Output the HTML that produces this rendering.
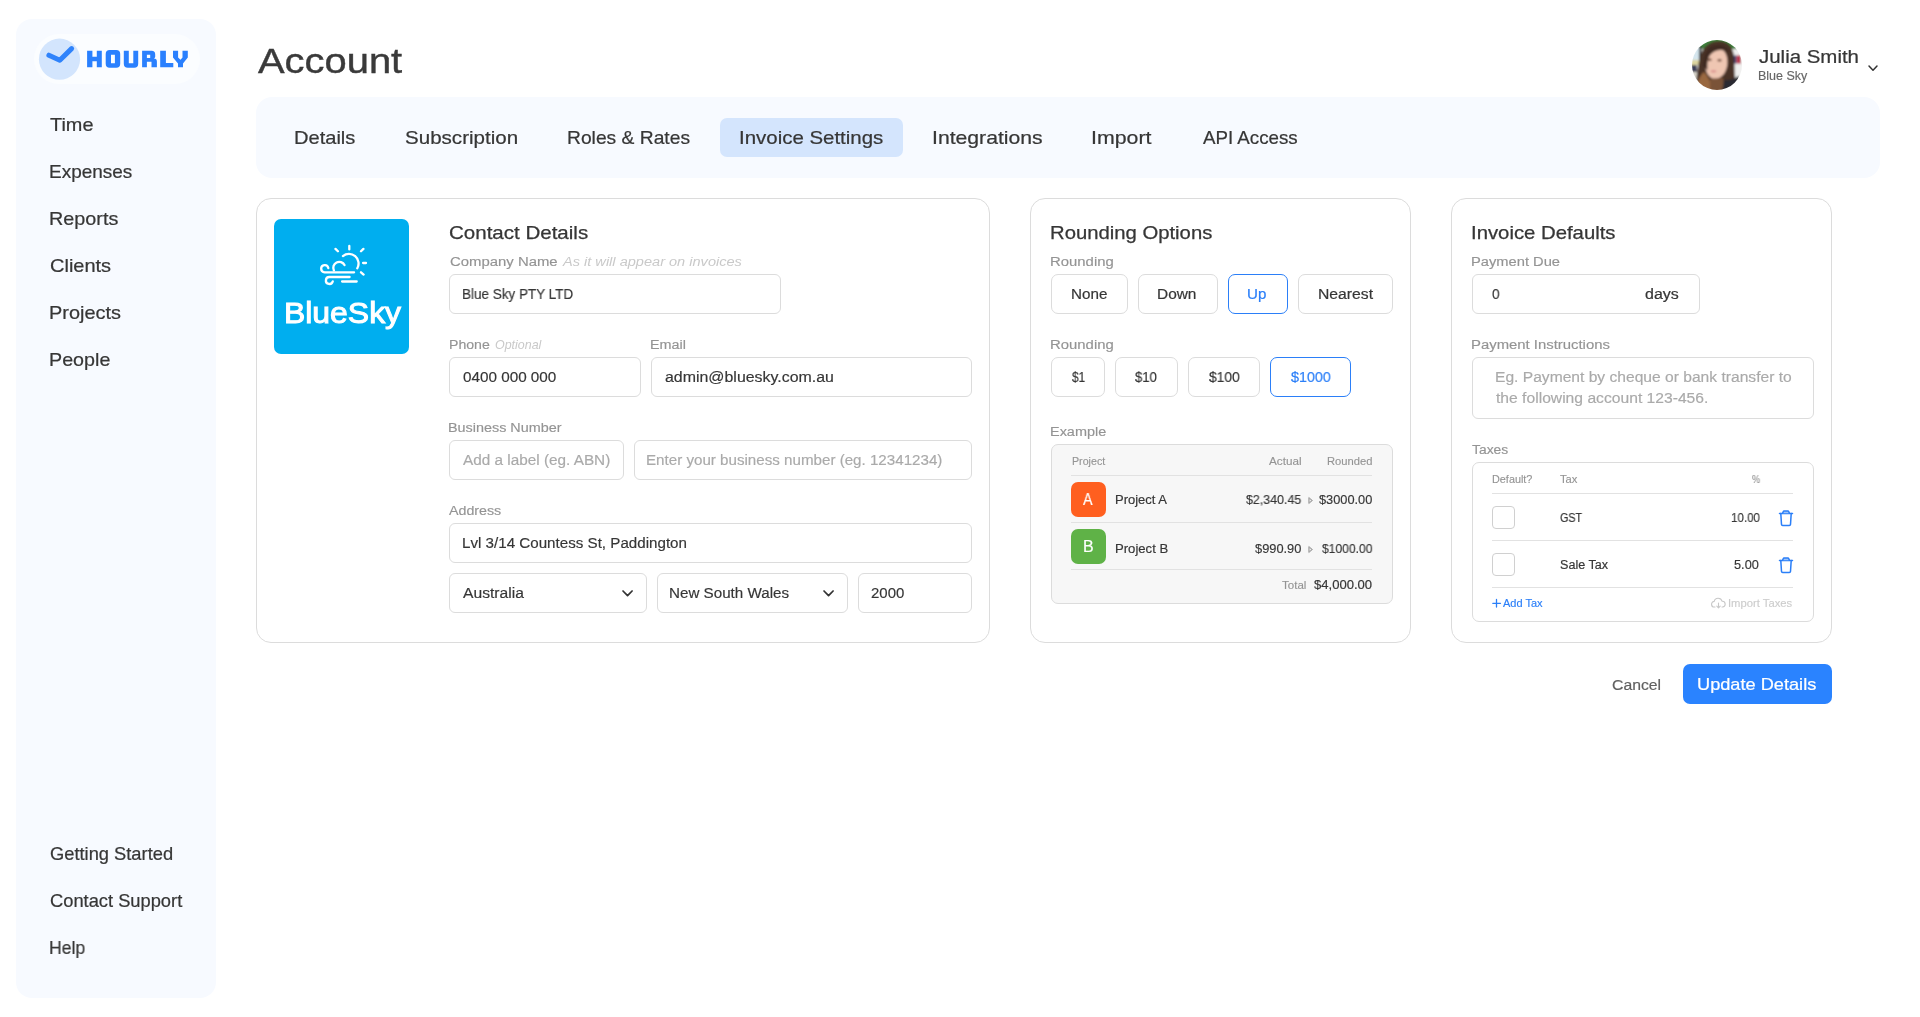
<!DOCTYPE html>
<html><head><meta charset="utf-8"><title>Account</title><style>*{margin:0;padding:0;box-sizing:border-box}
html,body{width:1920px;height:1017px;overflow:hidden;background:#fff}
body{position:relative;font-family:"Liberation Sans",sans-serif}
.b{position:absolute}
.t{position:absolute;white-space:pre;line-height:1;transform-origin:0 0;will-change:transform}
</style></head>
<body>
<div class="b" style="left:16px;top:19px;width:200px;height:979px;background:#f7faff;border-radius:16px"></div>
<div class="b" style="left:34px;top:34px;width:166px;height:50px;background:#fbfdff;border-radius:25px"></div>
<svg class="b" style="left:0;top:0" width="220" height="100" viewBox="0 0 220 100">
<circle cx="59.5" cy="59.2" r="20.6" fill="#d3e5fd"/>
<polyline points="48.9,55.2 59.8,60.2 71.6,48.6" fill="none" stroke="#2f83fb" stroke-width="5" stroke-linecap="round" stroke-linejoin="round"/>
<g fill="#2a80fe">
<path d="M87.1 50.8h5.3v6h4.4v-6h5v16.5h-5v-6.1h-4.4v6.1h-5.3z"/>
<path d="M109.7 50.1h6.5a4 4 0 0 1 4 4v9.6a4 4 0 0 1 -4 4h-6.5a4 4 0 0 1 -4 -4v-9.6a4 4 0 0 1 4 -4z M111 54.7v8.5h3.9v-8.5z" fill-rule="evenodd"/>
<path d="M123.8 50.8h5v12.4h4.5v-12.4h4.9v12.9a4 4 0 0 1 -4 4h-6.4a4 4 0 0 1 -4 -4z"/>
<path d="M142.1 50.8h9.5a3.6 3.6 0 0 1 3.6 3.6v2.4a2.2 2.2 0 0 1 -1.2 1.8a3 3 0 0 1 2.9 3v5.7h-5.4v-5.6h-4.6v5.6h-4.8z M146.9 54.7v3.3h3.3v-3.3z" fill-rule="evenodd"/>
<path d="M160.2 50.8h5.7v12.3h7.4v4.2h-13.1z"/>
<path d="M173 50.8h5.1v6.6l2.4 2.4l2 -2.4v-6.6h5.3v6.7l-4.8 6v3.8h-5v-3.8l-5 -6z"/>
</g></svg>
<svg class="b" style="left:1692px;top:40px" width="50" height="50" viewBox="0 0 50 50">
<defs><clipPath id="av"><circle cx="25" cy="25" r="25"/></clipPath><filter id="avb" x="-10%" y="-10%" width="120%" height="120%"><feGaussianBlur stdDeviation="0.9"/></filter></defs>
<g clip-path="url(#av)"><g filter="url(#avb)">
<rect x="-2" y="-2" width="54" height="54" fill="#ecefec"/>
<rect x="-2" y="-2" width="54" height="11" fill="#3d7f3a"/>
<rect x="-2" y="7" width="10" height="14" fill="#d5e6ee"/>
<rect x="-2" y="20" width="9" height="5" fill="#ddd6a0"/>
<rect x="-2" y="25" width="7" height="7" fill="#3c3f58"/>
<rect x="-2" y="32" width="9" height="12" fill="#d9d6cc"/>
<rect x="7" y="6" width="2.4" height="14" fill="#2c2f33"/>
<rect x="40" y="9" width="12" height="26" fill="#f0f0ef"/>
<rect x="40.5" y="15.5" width="4" height="8" fill="#3b4170"/>
<rect x="44.5" y="15.5" width="4.5" height="8" fill="#b9334a"/>
<path d="M4 52 C4 38 6 22 9 14 C12 5 20 1 27 1 C35 1 41 6 42 16 C43 26 42 36 44 44 L46 52 Z" fill="#4a3328"/>
<path d="M3 52 C5 42 8 35 12 32 C16 36 19 42 21 52 Z" fill="#99683f"/>
<path d="M12.8 22 C12.8 13 17 7.5 24 7.5 C31 7.5 35.4 13 35.4 22 C35.4 30 31 38.8 23 38.8 C16 38.8 12.8 30 12.8 22 Z" fill="#efc6b2"/>
<path d="M18 39 L31 38 L33 52 L18 52 Z" fill="#7a5238"/>
<path d="M32 40 C36 41 41 39 47 36 L52 52 L30 52 Z" fill="#2b2a30"/>
<path d="M11 26 C11 14 16 5 26 5 C33 5 37 9 38 13 C32 9 24 9 19 14 C16 17 15 22 15.5 30 Z" fill="#3f2c22"/>
<ellipse cx="17.7" cy="19.7" rx="2" ry="1.2" fill="#6b4433"/>
<ellipse cx="27.5" cy="20.2" rx="2" ry="1.2" fill="#6b4433"/>
<ellipse cx="21.5" cy="31.3" rx="3" ry="1.1" fill="#d98b8c"/>
</g></g></svg>
<svg class="b" style="left:1867.3px;top:63.7px" width="12" height="8.2"><polyline points="2,2 6.0,6.2 10,2" fill="none" stroke="#333" stroke-width="1.5" stroke-linecap="round" stroke-linejoin="round"/></svg>
<div class="b" style="left:256px;top:97px;width:1624px;height:81px;background:#f7faff;border-radius:16px"></div>
<div class="b" style="left:720px;top:118px;width:183px;height:39px;background:#d4e5fd;border-radius:7px"></div>
<div class="b" style="left:256px;top:198px;width:734px;height:445px;border:1px solid #dcdcdc;border-radius:15px"></div>
<div class="b" style="left:1030px;top:198px;width:381px;height:445px;border:1px solid #dcdcdc;border-radius:15px"></div>
<div class="b" style="left:1451px;top:198px;width:381px;height:445px;border:1px solid #dcdcdc;border-radius:15px"></div>
<div class="b" style="left:274px;top:219px;width:135px;height:135px;background:#00aeef;border-radius:7px"></div>
<svg class="b" style="left:310px;top:238px" width="65" height="54" viewBox="0 0 65 54" fill="none" stroke="#fff" stroke-width="2.3" stroke-linecap="round">
<path d="M32.9 18.1 A9.6 9.6 0 0 1 47.3 30.3"/>
<path d="M39.3 8v3.4 M25.5 10.9l2.4 2.4 M53.4 10.9l-2.4 2.4 M53.1 25h2.9 M51 34.3l2.6 2.3"/>
<path d="M34.5 27.1 A5.7 5.7 0 1 0 23.9 32.4"/>
<path d="M18.3 30 A3.6 3.6 0 1 0 14.6 34.3 H44.1"/>
<path d="M39.6 39 H19.6 A3.5 3.5 0 1 0 22.8 43.3"/>
<path d="M32.1 43.5 H46.7"/>
</svg>
<div class="b" style="left:449px;top:274px;width:332px;height:40px;background:#fff;border:1px solid #dcdcdc;border-radius:6px"></div>
<div class="b" style="left:449px;top:357px;width:192px;height:40px;background:#fff;border:1px solid #dcdcdc;border-radius:6px"></div>
<div class="b" style="left:651px;top:357px;width:321px;height:40px;background:#fff;border:1px solid #dcdcdc;border-radius:6px"></div>
<div class="b" style="left:449px;top:440px;width:175px;height:40px;background:#fff;border:1px solid #dcdcdc;border-radius:6px"></div>
<div class="b" style="left:634px;top:440px;width:338px;height:40px;background:#fff;border:1px solid #dcdcdc;border-radius:6px"></div>
<div class="b" style="left:449px;top:523px;width:523px;height:40px;background:#fff;border:1px solid #dcdcdc;border-radius:6px"></div>
<div class="b" style="left:449px;top:573px;width:198px;height:40px;background:#fff;border:1px solid #dcdcdc;border-radius:6px"></div>
<div class="b" style="left:657px;top:573px;width:191px;height:40px;background:#fff;border:1px solid #dcdcdc;border-radius:6px"></div>
<div class="b" style="left:858px;top:573px;width:114px;height:40px;background:#fff;border:1px solid #dcdcdc;border-radius:6px"></div>
<svg class="b" style="left:620.5px;top:588.7px" width="13.1" height="8.7"><polyline points="2,2 6.55,6.7 11.1,2" fill="none" stroke="#333" stroke-width="1.7" stroke-linecap="round" stroke-linejoin="round"/></svg>
<svg class="b" style="left:821.8px;top:588.7px" width="13.1" height="8.7"><polyline points="2,2 6.55,6.7 11.1,2" fill="none" stroke="#333" stroke-width="1.7" stroke-linecap="round" stroke-linejoin="round"/></svg>
<div class="b" style="left:1051px;top:274px;width:77px;height:40px;background:#fff;border:1px solid #dcdcdc;border-radius:7px"></div>
<div class="b" style="left:1138px;top:274px;width:80px;height:40px;background:#fff;border:1px solid #dcdcdc;border-radius:7px"></div>
<div class="b" style="left:1228px;top:274px;width:60px;height:40px;background:#fff;border:1px solid #2b7ff8;border-radius:7px"></div>
<div class="b" style="left:1298px;top:274px;width:95px;height:40px;background:#fff;border:1px solid #dcdcdc;border-radius:7px"></div>
<div class="b" style="left:1051px;top:357px;width:54px;height:40px;background:#fff;border:1px solid #dcdcdc;border-radius:7px"></div>
<div class="b" style="left:1115px;top:357px;width:63px;height:40px;background:#fff;border:1px solid #dcdcdc;border-radius:7px"></div>
<div class="b" style="left:1188px;top:357px;width:72px;height:40px;background:#fff;border:1px solid #dcdcdc;border-radius:7px"></div>
<div class="b" style="left:1270px;top:357px;width:81px;height:40px;background:#fff;border:1px solid #2b7ff8;border-radius:7px"></div>
<div class="b" style="left:1051px;top:444px;width:342px;height:160px;background:#f7f7f7;border:1px solid #dcdcdc;border-radius:7px"></div>
<div class="b" style="left:1071px;top:475px;width:301px;height:1px;background:#e2e2e2"></div>
<div class="b" style="left:1071px;top:522px;width:301px;height:1px;background:#e2e2e2"></div>
<div class="b" style="left:1071px;top:569px;width:301px;height:1px;background:#e2e2e2"></div>
<div class="b" style="left:1071px;top:482px;width:35px;height:35px;background:#ff5f1f;border-radius:7px"></div>
<div class="b" style="left:1071px;top:529px;width:35px;height:35px;background:#5fb247;border-radius:7px"></div>
<svg class="b" style="left:1307px;top:496px" width="8" height="9"><path d="M1.8 1.5 L5.5 4.5 L1.8 7.5 Z" fill="#a9a9a9" stroke="#a9a9a9" stroke-width="1" stroke-linejoin="round"/><path d="M2.6 3.2 L4.2 4.5 L2.6 5.8Z" fill="#f7f7f7"/></svg>
<svg class="b" style="left:1307px;top:545px" width="8" height="9"><path d="M1.8 1.5 L5.5 4.5 L1.8 7.5 Z" fill="#a9a9a9" stroke="#a9a9a9" stroke-width="1" stroke-linejoin="round"/><path d="M2.6 3.2 L4.2 4.5 L2.6 5.8Z" fill="#f7f7f7"/></svg>
<div class="b" style="left:1472px;top:274px;width:228px;height:40px;background:#fff;border:1px solid #dcdcdc;border-radius:6px"></div>
<div class="b" style="left:1472px;top:357px;width:342px;height:62px;background:#fff;border:1px solid #dcdcdc;border-radius:6px"></div>
<div class="b" style="left:1472px;top:462px;width:342px;height:160px;background:#fff;border:1px solid #dcdcdc;border-radius:7px"></div>
<div class="b" style="left:1492px;top:493px;width:301px;height:1px;background:#e2e2e2"></div>
<div class="b" style="left:1492px;top:540px;width:301px;height:1px;background:#e2e2e2"></div>
<div class="b" style="left:1492px;top:587px;width:301px;height:1px;background:#e2e2e2"></div>
<div class="b" style="left:1492px;top:506px;width:23px;height:23px;background:#fff;border:1px solid #d0d0d0;border-radius:4px"></div>
<div class="b" style="left:1492px;top:553px;width:23px;height:23px;background:#fff;border:1px solid #d0d0d0;border-radius:4px"></div>
<svg class="b" style="left:1778px;top:509.5px" width="16" height="17" viewBox="0 0 16 17" fill="none" stroke="#2b7ff8" stroke-width="1.5" stroke-linecap="round" stroke-linejoin="round">
<path d="M1.5 3.4h13"/><path d="M4.6 3.2l0.6-1.5a1 1 0 0 1 0.9-0.6h3.8a1 1 0 0 1 0.9 0.6l0.6 1.5" fill="#9cc3fb"/>
<path d="M2.8 3.6l0.7 10.8a1.2 1.2 0 0 0 1.2 1.1h6.6a1.2 1.2 0 0 0 1.2-1.1l0.7-10.8"/></svg>
<svg class="b" style="left:1778px;top:556.5px" width="16" height="17" viewBox="0 0 16 17" fill="none" stroke="#2b7ff8" stroke-width="1.5" stroke-linecap="round" stroke-linejoin="round">
<path d="M1.5 3.4h13"/><path d="M4.6 3.2l0.6-1.5a1 1 0 0 1 0.9-0.6h3.8a1 1 0 0 1 0.9 0.6l0.6 1.5" fill="#9cc3fb"/>
<path d="M2.8 3.6l0.7 10.8a1.2 1.2 0 0 0 1.2 1.1h6.6a1.2 1.2 0 0 0 1.2-1.1l0.7-10.8"/></svg>
<svg class="b" style="left:1491px;top:597px" width="11" height="11"><path d="M5.5 2.5v7.5 M1.8 6.3h7.7" stroke="#2b7ff8" stroke-width="1.3" stroke-linecap="round"/></svg>
<svg class="b" style="left:1711px;top:597px" width="15" height="12" viewBox="0 0 15 12" fill="none" stroke="#c8c8c8" stroke-width="1.1" stroke-linecap="round" stroke-linejoin="round"><path d="M4 10H3.5A2.8 2.8 0 0 1 3.2 4.4A4 4 0 0 1 11 4.2A2.9 2.9 0 0 1 11.5 10H11"/><path d="M7.5 6v4.8 M5.8 9.2l1.7 1.7l1.7-1.7"/></svg>
<div class="b" style="left:1683px;top:664px;width:149px;height:40px;background:#2a83ff;border-radius:7px"></div>
<span class="t" style="left:49.72px;top:116.00px;font-size:18.31px;color:#363636;transform:scaleX(1.0869);-webkit-text-stroke:0.22px #363636">Time</span>
<span class="t" style="left:48.68px;top:163.00px;font-size:18.31px;color:#363636;transform:scaleX(1.0375);-webkit-text-stroke:0.22px #363636">Expenses</span>
<span class="t" style="left:48.64px;top:209.80px;font-size:18.31px;color:#363636;transform:scaleX(1.0818);-webkit-text-stroke:0.22px #363636">Reports</span>
<span class="t" style="left:49.72px;top:256.70px;font-size:18.31px;color:#363636;transform:scaleX(1.0929);-webkit-text-stroke:0.22px #363636">Clients</span>
<span class="t" style="left:48.63px;top:303.60px;font-size:18.31px;color:#363636;transform:scaleX(1.0880);-webkit-text-stroke:0.22px #363636">Projects</span>
<span class="t" style="left:48.64px;top:350.50px;font-size:18.31px;color:#363636;transform:scaleX(1.0765);-webkit-text-stroke:0.22px #363636">People</span>
<span class="t" style="left:49.71px;top:845.30px;font-size:18.31px;color:#363636;-webkit-text-stroke:0.22px #363636">Getting Started</span>
<span class="t" style="left:49.71px;top:892.20px;font-size:18.31px;color:#363636;-webkit-text-stroke:0.22px #363636">Contact Support</span>
<span class="t" style="left:48.75px;top:939.00px;font-size:18.31px;color:#363636;transform:scaleX(0.9598);-webkit-text-stroke:0.22px #363636">Help</span>
<span class="t" style="left:257.54px;top:42.90px;font-size:35.32px;color:#3a3a3a;transform:scaleX(1.1299);-webkit-text-stroke:0.42px #3a3a3a">Account</span>
<span class="t" style="left:1758.92px;top:48.00px;font-size:18.90px;color:#363636;transform:scaleX(1.0821);-webkit-text-stroke:0.23px #363636">Julia Smith</span>
<span class="t" style="left:1757.88px;top:69.60px;font-size:12.50px;color:#666666;transform:scaleX(0.9913);-webkit-text-stroke:0.15px #666666">Blue Sky</span>
<span class="t" style="left:294.14px;top:128.90px;font-size:18.60px;color:#363636;transform:scaleX(1.0796);-webkit-text-stroke:0.22px #363636">Details</span>
<span class="t" style="left:405.22px;top:128.90px;font-size:18.60px;color:#363636;transform:scaleX(1.1056);-webkit-text-stroke:0.22px #363636">Subscription</span>
<span class="t" style="left:567.08px;top:128.90px;font-size:18.60px;color:#363636;transform:scaleX(1.0351);-webkit-text-stroke:0.22px #363636">Roles &amp; Rates</span>
<span class="t" style="left:738.82px;top:128.90px;font-size:18.60px;color:#363636;transform:scaleX(1.0992);-webkit-text-stroke:0.22px #363636">Invoice Settings</span>
<span class="t" style="left:931.99px;top:128.90px;font-size:18.60px;color:#363636;transform:scaleX(1.1385);-webkit-text-stroke:0.22px #363636">Integrations</span>
<span class="t" style="left:1090.98px;top:128.90px;font-size:18.60px;color:#363636;transform:scaleX(1.1469);-webkit-text-stroke:0.22px #363636">Import</span>
<span class="t" style="left:1202.91px;top:128.90px;font-size:18.60px;color:#363636;transform:scaleX(1.0064);-webkit-text-stroke:0.22px #363636">API Access</span>
<span class="t" style="left:284.10px;top:298.00px;font-size:29.94px;color:#ffffff;transform:scaleX(1.0656);-webkit-text-stroke:1.00px #ffffff">BlueSky</span>
<span class="t" style="left:449.14px;top:225.00px;font-size:17.73px;color:#363636;transform:scaleX(1.1582);-webkit-text-stroke:0.25px #363636">Contact Details</span>
<span class="t" style="left:449.59px;top:255.00px;font-size:13.23px;color:#949494;transform:scaleX(1.1268);-webkit-text-stroke:0.16px #949494">Company Name</span>
<span class="t" style="left:563.20px;top:255.00px;font-size:13.23px;color:#c9c9c9;transform:scaleX(1.1016);font-style:italic">As it will appear on invoices</span>
<span class="t" style="left:461.73px;top:287.00px;font-size:14.24px;color:#363636;transform:scaleX(0.9477);-webkit-text-stroke:0.17px #363636">Blue Sky PTY LTD</span>
<span class="t" style="left:448.82px;top:338.00px;font-size:13.23px;color:#949494;transform:scaleX(1.0667);-webkit-text-stroke:0.16px #949494">Phone</span>
<span class="t" style="left:494.50px;top:340.00px;font-size:11.92px;color:#c9c9c9;transform:scaleX(1.0447);font-style:italic">Optional</span>
<span class="t" style="left:650.30px;top:338.00px;font-size:13.23px;color:#949494;transform:scaleX(1.0875);-webkit-text-stroke:0.16px #949494">Email</span>
<span class="t" style="left:462.99px;top:370.00px;font-size:14.24px;color:#363636;transform:scaleX(1.0718);-webkit-text-stroke:0.17px #363636">0400 000 000</span>
<span class="t" style="left:664.50px;top:370.00px;font-size:14.24px;color:#363636;transform:scaleX(1.1183);-webkit-text-stroke:0.17px #363636">admin@bluesky.com.au</span>
<span class="t" style="left:448.30px;top:421.00px;font-size:13.23px;color:#949494;transform:scaleX(1.0876);-webkit-text-stroke:0.16px #949494">Business Number</span>
<span class="t" style="left:462.59px;top:453.00px;font-size:14.24px;color:#aaaaaa;transform:scaleX(1.0758);-webkit-text-stroke:0.17px #aaaaaa">Add a label (eg. ABN)</span>
<span class="t" style="left:646.03px;top:453.00px;font-size:14.24px;color:#aaaaaa;transform:scaleX(1.0641);-webkit-text-stroke:0.17px #aaaaaa">Enter your business number (eg. 12341234)</span>
<span class="t" style="left:449.39px;top:504.00px;font-size:13.23px;color:#949494;transform:scaleX(1.0766);-webkit-text-stroke:0.16px #949494">Address</span>
<span class="t" style="left:461.53px;top:536.00px;font-size:14.24px;color:#363636;transform:scaleX(1.0647);-webkit-text-stroke:0.17px #363636">Lvl 3/14 Countess St, Paddington</span>
<span class="t" style="left:462.59px;top:586.00px;font-size:14.24px;color:#363636;transform:scaleX(1.1000);-webkit-text-stroke:0.17px #363636">Australia</span>
<span class="t" style="left:669.32px;top:586.00px;font-size:14.24px;color:#363636;transform:scaleX(1.0667);-webkit-text-stroke:0.17px #363636">New South Wales</span>
<span class="t" style="left:870.99px;top:586.00px;font-size:14.24px;color:#363636;transform:scaleX(1.0526);-webkit-text-stroke:0.17px #363636">2000</span>
<span class="t" style="left:1050.00px;top:225.00px;font-size:17.73px;color:#363636;transform:scaleX(1.1442);-webkit-text-stroke:0.25px #363636">Rounding Options</span>
<span class="t" style="left:1049.96px;top:255.00px;font-size:13.23px;color:#949494;transform:scaleX(1.1264);-webkit-text-stroke:0.16px #949494">Rounding</span>
<span class="t" style="left:1070.65px;top:287.00px;font-size:14.39px;color:#363636;transform:scaleX(1.0574);-webkit-text-stroke:0.20px #363636">None</span>
<span class="t" style="left:1157.43px;top:287.00px;font-size:14.39px;color:#363636;transform:scaleX(1.0735);-webkit-text-stroke:0.20px #363636">Down</span>
<span class="t" style="left:1247.45px;top:287.00px;font-size:14.39px;color:#2b7ff8;transform:scaleX(1.0522);-webkit-text-stroke:0.20px #2b7ff8">Up</span>
<span class="t" style="left:1317.52px;top:287.00px;font-size:14.39px;color:#363636;transform:scaleX(1.0940);-webkit-text-stroke:0.20px #363636">Nearest</span>
<span class="t" style="left:1049.96px;top:338.00px;font-size:13.23px;color:#949494;transform:scaleX(1.1264);-webkit-text-stroke:0.16px #949494">Rounding</span>
<span class="t" style="left:1071.68px;top:370.00px;font-size:14.39px;color:#363636;transform:scaleX(0.8212);-webkit-text-stroke:0.20px #363636">$1</span>
<span class="t" style="left:1135.39px;top:370.00px;font-size:14.39px;color:#363636;transform:scaleX(0.9094);-webkit-text-stroke:0.20px #363636">$10</span>
<span class="t" style="left:1208.50px;top:370.00px;font-size:14.39px;color:#363636;transform:scaleX(0.9601);-webkit-text-stroke:0.20px #363636">$100</span>
<span class="t" style="left:1290.60px;top:370.00px;font-size:14.39px;color:#2b7ff8;transform:scaleX(0.9930);-webkit-text-stroke:0.20px #2b7ff8">$1000</span>
<span class="t" style="left:1050.29px;top:425.00px;font-size:13.23px;color:#949494;transform:scaleX(1.0928);-webkit-text-stroke:0.16px #949494">Example</span>
<span class="t" style="left:1071.66px;top:457.00px;font-size:10.03px;color:#949494;transform:scaleX(1.0663);-webkit-text-stroke:0.12px #949494">Project</span>
<span class="t" style="left:1269.07px;top:457.00px;font-size:10.03px;color:#949494;transform:scaleX(1.1683);-webkit-text-stroke:0.12px #949494">Actual</span>
<span class="t" style="left:1326.97px;top:457.00px;font-size:10.03px;color:#949494;transform:scaleX(1.1168);-webkit-text-stroke:0.12px #949494">Rounded</span>
<span class="t" style="left:1083.09px;top:492.00px;font-size:15.99px;color:#ffffff;transform:scaleX(0.8935);-webkit-text-stroke:0.19px #ffffff">A</span>
<span class="t" style="left:1115.48px;top:494.00px;font-size:12.79px;color:#363636;transform:scaleX(1.0154);-webkit-text-stroke:0.18px #363636">Project A</span>
<span class="t" style="left:1245.77px;top:494.00px;font-size:12.79px;color:#363636;transform:scaleX(0.9700);-webkit-text-stroke:0.15px #363636">$2,340.45</span>
<span class="t" style="left:1318.68px;top:494.00px;font-size:12.79px;color:#363636;-webkit-text-stroke:0.15px #363636">$3000.00</span>
<span class="t" style="left:1083.22px;top:539.00px;font-size:15.99px;color:#ffffff;transform:scaleX(0.9682);-webkit-text-stroke:0.19px #ffffff">B</span>
<span class="t" style="left:1115.47px;top:543.00px;font-size:12.79px;color:#363636;transform:scaleX(1.0256);-webkit-text-stroke:0.18px #363636">Project B</span>
<span class="t" style="left:1254.58px;top:543.00px;font-size:12.79px;color:#363636;transform:scaleX(1.0033);-webkit-text-stroke:0.15px #363636">$990.90</span>
<span class="t" style="left:1321.57px;top:543.00px;font-size:12.79px;color:#363636;transform:scaleX(0.9465);-webkit-text-stroke:0.15px #363636">$1000.00</span>
<span class="t" style="left:1282.37px;top:581.00px;font-size:10.17px;color:#949494;transform:scaleX(1.1352);-webkit-text-stroke:0.12px #949494">Total</span>
<span class="t" style="left:1313.69px;top:579.00px;font-size:12.79px;color:#363636;transform:scaleX(1.0223);-webkit-text-stroke:0.18px #363636">$4,000.00</span>
<span class="t" style="left:1471.00px;top:225.00px;font-size:17.73px;color:#363636;transform:scaleX(1.1462);-webkit-text-stroke:0.25px #363636">Invoice Defaults</span>
<span class="t" style="left:1470.98px;top:255.00px;font-size:13.23px;color:#949494;transform:scaleX(1.1116);-webkit-text-stroke:0.16px #949494">Payment Due</span>
<span class="t" style="left:1492.48px;top:287.00px;font-size:14.24px;color:#363636;transform:scaleX(0.9546);-webkit-text-stroke:0.17px #363636">0</span>
<span class="t" style="left:1645.41px;top:287.00px;font-size:14.24px;color:#363636;transform:scaleX(1.1244);-webkit-text-stroke:0.20px #363636">days</span>
<span class="t" style="left:1470.96px;top:338.00px;font-size:13.23px;color:#949494;transform:scaleX(1.1254);-webkit-text-stroke:0.16px #949494">Payment Instructions</span>
<span class="t" style="left:1494.81px;top:370.00px;font-size:14.39px;color:#aaaaaa;transform:scaleX(1.0857);-webkit-text-stroke:0.17px #aaaaaa">Eg. Payment by cheque or bank transfer to</span>
<span class="t" style="left:1495.89px;top:391.00px;font-size:14.39px;color:#aaaaaa;transform:scaleX(1.0892);-webkit-text-stroke:0.17px #aaaaaa">the following account 123-456.</span>
<span class="t" style="left:1472.28px;top:443.00px;font-size:13.23px;color:#949494;transform:scaleX(1.0490);-webkit-text-stroke:0.16px #949494">Taxes</span>
<span class="t" style="left:1492.27px;top:475.00px;font-size:10.03px;color:#949494;transform:scaleX(1.0831);-webkit-text-stroke:0.12px #949494">Default?</span>
<span class="t" style="left:1560.07px;top:475.00px;font-size:10.03px;color:#949494;transform:scaleX(1.1148);-webkit-text-stroke:0.12px #949494">Tax</span>
<span class="t" style="left:1751.65px;top:475.00px;font-size:10.03px;color:#949494;transform:scaleX(0.9101);-webkit-text-stroke:0.12px #949494">%</span>
<span class="t" style="left:1560.48px;top:512.00px;font-size:12.50px;color:#363636;transform:scaleX(0.8576);-webkit-text-stroke:0.18px #363636">GST</span>
<span class="t" style="left:1730.87px;top:512.00px;font-size:12.50px;color:#363636;transform:scaleX(0.9244);-webkit-text-stroke:0.15px #363636">10.00</span>
<span class="t" style="left:1560.49px;top:559.00px;font-size:12.50px;color:#363636;transform:scaleX(1.0088);-webkit-text-stroke:0.18px #363636">Sale Tax</span>
<span class="t" style="left:1734.08px;top:559.00px;font-size:12.50px;color:#363636;transform:scaleX(1.0193);-webkit-text-stroke:0.15px #363636">5.00</span>
<span class="t" style="left:1503.38px;top:599.00px;font-size:10.03px;color:#2b7ff8;transform:scaleX(1.0985);-webkit-text-stroke:0.14px #2b7ff8">Add Tax</span>
<span class="t" style="left:1728.07px;top:599.00px;font-size:10.03px;color:#cccccc;transform:scaleX(1.1229);-webkit-text-stroke:0.12px #cccccc">Import Taxes</span>
<span class="t" style="left:1612.49px;top:678.00px;font-size:14.53px;color:#606060;transform:scaleX(1.0857);-webkit-text-stroke:0.17px #606060">Cancel</span>
<span class="t" style="left:1696.99px;top:677.00px;font-size:15.99px;color:#ffffff;transform:scaleX(1.1377);-webkit-text-stroke:0.22px #ffffff">Update Details</span>
</body></html>
